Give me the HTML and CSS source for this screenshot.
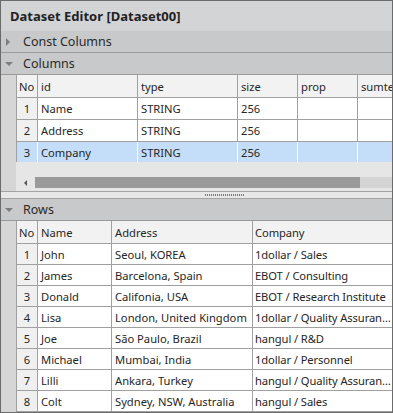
FILE: index.html
```html
<!DOCTYPE html>
<html>
<head>
    <title>Dataset Editor</title>
    <link rel="stylesheet" href="styles.css">
</head>
<body>
<div class="editor">
    <div class="title">Dataset Editor [Dataset00]</div>

    <div class="section"><span class="arrow-right"></span>Const Columns</div>
    <div class="section"><span class="arrow-down"></span>Columns</div>

    <div class="pane cols-pane">
        <div class="gutter"></div>
        <div class="grid">
            <table class="cols">
                <colgroup>
                    <col class="w-no"><col class="w-100"><col class="w-100"><col class="w-60"><col class="w-60"><col class="w-80">
                </colgroup>
                <tr class="head"><td>No</td><td>id</td><td>type</td><td>size</td><td>prop</td><td>sumtext</td></tr>
                <tr><td class="no">1</td><td>Name</td><td>STRING</td><td>256</td><td></td><td></td></tr>
                <tr><td class="no">2</td><td>Address</td><td>STRING</td><td>256</td><td></td><td></td></tr>
                <tr class="selected"><td class="no">3</td><td>Company</td><td>STRING</td><td>256</td><td></td><td></td></tr>
            </table>
            <div class="filler"></div>
            <div class="hscroll">
                <div class="scroll-btn"><span class="arrow-left"></span></div>
                <div class="thumb"></div>
            </div>
        </div>
    </div>

    <div class="splitter"><span class="grip"></span></div>

    <div class="section"><span class="arrow-down"></span>Rows</div>

    <div class="pane rows-pane">
        <div class="gutter"></div>
        <div class="grid">
            <table class="rows">
                <colgroup>
                    <col class="w-no"><col class="w-name"><col class="w-addr"><col class="w-comp">
                </colgroup>
                <tr class="head"><td>No</td><td>Name</td><td>Address</td><td>Company</td></tr>
                <tr><td class="no">1</td><td>John</td><td>Seoul, KOREA</td><td>1dollar / Sales</td></tr>
                <tr><td class="no">2</td><td>James</td><td>Barcelona, Spain</td><td>EBOT / Consulting</td></tr>
                <tr><td class="no">3</td><td>Donald</td><td>Califonia, USA</td><td>EBOT / Research Institute</td></tr>
                <tr><td class="no">4</td><td>Lisa</td><td>London, United Kingdom</td><td>1dollar / Quality Assurance</td></tr>
                <tr><td class="no">5</td><td>Joe</td><td>São Paulo, Brazil</td><td>hangul / R&amp;D</td></tr>
                <tr><td class="no">6</td><td>Michael</td><td>Mumbai, India</td><td>1dollar / Personnel</td></tr>
                <tr><td class="no">7</td><td>Lilli</td><td>Ankara, Turkey</td><td>hangul / Quality Assurance</td></tr>
                <tr><td class="no">8</td><td>Colt</td><td>Sydney, NSW, Australia</td><td>hangul / Sales</td></tr>
            </table>
        </div>
    </div>
</div>
</body>
</html>
```

FILE: styles.css
```css
  body {
    margin: 0;
    font-family: "Segoe UI", "Noto Sans", sans-serif;
    color: #262626;
  }

  .editor {
    width: 393px;
    height: 413px;
    box-sizing: border-box;
    border: 1px solid #6b6b6b;
    display: flex;
    flex-direction: column;
    background-color: #e6e6e6;
    overflow: hidden;
  }

  .title {
    height: 30px;
    flex: none;
    background-color: #d3d4d6;
    font-size: 13px;
    font-weight: bold;
    padding-left: 9px;
    display: flex;
    align-items: center;
    color: #222;
  }

  .section {
    height: 21px;
    flex: none;
    background-color: #c8c9cb;
    border-bottom: 1px solid #9a9a9a;
    font-size: 12.5px;
    display: flex;
    align-items: center;
    color: #2a2a2a;
  }

  .arrow-right {
    width: 0;
    height: 0;
    border-left: 4px solid #7d7d7d;
    border-top: 4px solid transparent;
    border-bottom: 4px solid transparent;
    margin: 0 13px 0 5px;
  }

  .arrow-down {
    width: 0;
    height: 0;
    border-top: 4px solid #7d7d7d;
    border-left: 4px solid transparent;
    border-right: 4px solid transparent;
    margin: 1px 10px 0 4px;
  }

  .pane {
    display: flex;
    flex: none;
  }

  .gutter {
    width: 15px;
    flex: none;
    background-color: #d6d6d6;
  }

  .grid {
    flex: 1;
    overflow: hidden;
    min-width: 0;
  }

  table {
    border-collapse: separate;
    border-spacing: 0;
    table-layout: fixed;
    font-size: 11.2px;
    border-left: 1px solid #a0a0a0;
  }

  table.cols {
    width: 421px;
  }

  table.rows {
    width: 376px;
  }

  col.w-no { width: 21px; }
  col.w-100 { width: 100px; }
  col.w-60 { width: 60px; }
  col.w-80 { width: 80px; }
  col.w-name { width: 74px; }
  col.w-addr { width: 141px; }
  col.w-comp { width: 140px; }

  td {
    border-right: 1px solid #a0a0a0;
    border-bottom: 1px solid #a0a0a0;
    padding: 0 0 0 3px;
    background-color: #ffffff;
    white-space: nowrap;
    overflow: hidden;
    text-overflow: ellipsis;
    box-sizing: border-box;
  }

  .cols td {
    height: 22px;
  }

  .rows td {
    height: 21px;
  }

  .cols tr.head td,
  .rows tr.head td {
    height: 23px;
  }

  tr.head td {
    background-color: #f2f2f2;
  }

  tr.head td:first-child {
    padding-left: 2px;
    text-overflow: clip;
  }

  td.no {
    background-color: #f0f0f0;
    text-align: center;
    padding: 0;
  }

  .rows td:last-child {
    padding-left: 2px;
    letter-spacing: -0.1px;
  }

  tr.selected td {
    background-color: #c4ddf8;
    border-right-color: #ffffff;
    height: 20px;
    border-bottom: none;
  }

  .filler {
    height: 15px;
  }

  .hscroll {
    height: 11px;
    display: flex;
    background-color: #d4d4d4;
    margin-bottom: 3px;
  }

  .scroll-btn {
    width: 19px;
    flex: none;
    background-color: #e6e6e6;
    display: flex;
    align-items: center;
  }

  .arrow-left {
    width: 0;
    height: 0;
    border-right: 3px solid #555;
    border-top: 3px solid transparent;
    border-bottom: 3px solid transparent;
    margin-left: 8px;
  }

  .thumb {
    width: 325px;
    background-color: #9a9a9a;
  }

  .splitter {
    height: 6px;
    flex: none;
    border-top: 1px solid #a3a3a3;
    border-bottom: 1px solid #a3a3a3;
    background-color: #e8e8e8;
    display: flex;
    justify-content: center;
    align-items: center;
  }

  .grip {
    width: 40px;
    height: 2px;
    margin-left: 56px;
    background-image: repeating-linear-gradient(90deg, #7a7a7a 0 1px, transparent 1px 2px);
  }
```
